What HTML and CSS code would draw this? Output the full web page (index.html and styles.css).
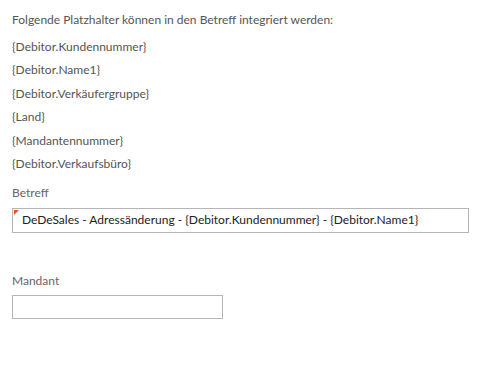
FILE: index.html
```html
<!DOCTYPE html>
<html lang="de">
<head>
<meta charset="utf-8">
<link rel="stylesheet" href="styles.css">
</head>
<body>
<div class="page">
  <p class="intro">Folgende Platzhalter können in den Betreff integriert werden:</p>
  <ul class="placeholders">
    <li>{Debitor.Kundennummer}</li>
    <li>{Debitor.Name1}</li>
    <li>{Debitor.Verkäufergruppe}</li>
    <li>{Land}</li>
    <li>{Mandantennummer}</li>
    <li>{Debitor.Verkaufsbüro}</li>
  </ul>
  <div class="field field-betreff">
    <label class="label">Betreff</label>
    <div class="input input-wide"><span class="marker"></span>DeDeSales - Adressänderung - {Debitor.Kundennummer} - {Debitor.Name1}</div>
  </div>
  <div class="field field-mandant">
    <label class="label">Mandant</label>
    <div class="input input-narrow"></div>
  </div>
</div>
</body>
</html>
```
FILE: styles.css
```css
html, body {
  margin: 0;
  padding: 0;
  background: #ffffff;
}
.page {
  padding: 10px 12px 0 12px;
  font-family: "Lato", "Open Sans", sans-serif;
  font-size: 12px;
  color: #555555;
}
.intro {
  margin: 0;
  height: 20px;
  line-height: 20px;
}
.placeholders {
  list-style: none;
  margin: 7px 0 0 0;
  padding: 0;
  display: flex;
  flex-direction: column;
}
.placeholders li {
  height: 23.4px;
  line-height: 20px;
}
.field {
  display: flex;
  flex-direction: column;
}
.field-betreff {
  margin-top: 6px;
}
.field-mandant {
  margin-top: 38px;
}
.label {
  line-height: 20px;
  height: 20px;
  color: #666666;
}
.input {
  position: relative;
  box-sizing: border-box;
  height: 25px;
  border: 1px solid #b5b5b5;
  background: #ffffff;
  margin-top: 5px;
  color: #222222;
  line-height: 22px;
  padding-left: 9px;
}
.field-mandant .input {
  margin-top: 4px;
  height: 24px;
}
.input-wide {
  width: 457px;
}
.input-narrow {
  width: 211px;
}
.marker {
  position: absolute;
  left: 1px;
  top: 1px;
  width: 0;
  height: 0;
  border-top: 5px solid #e8541c;
  border-right: 5px solid transparent;
}
```
